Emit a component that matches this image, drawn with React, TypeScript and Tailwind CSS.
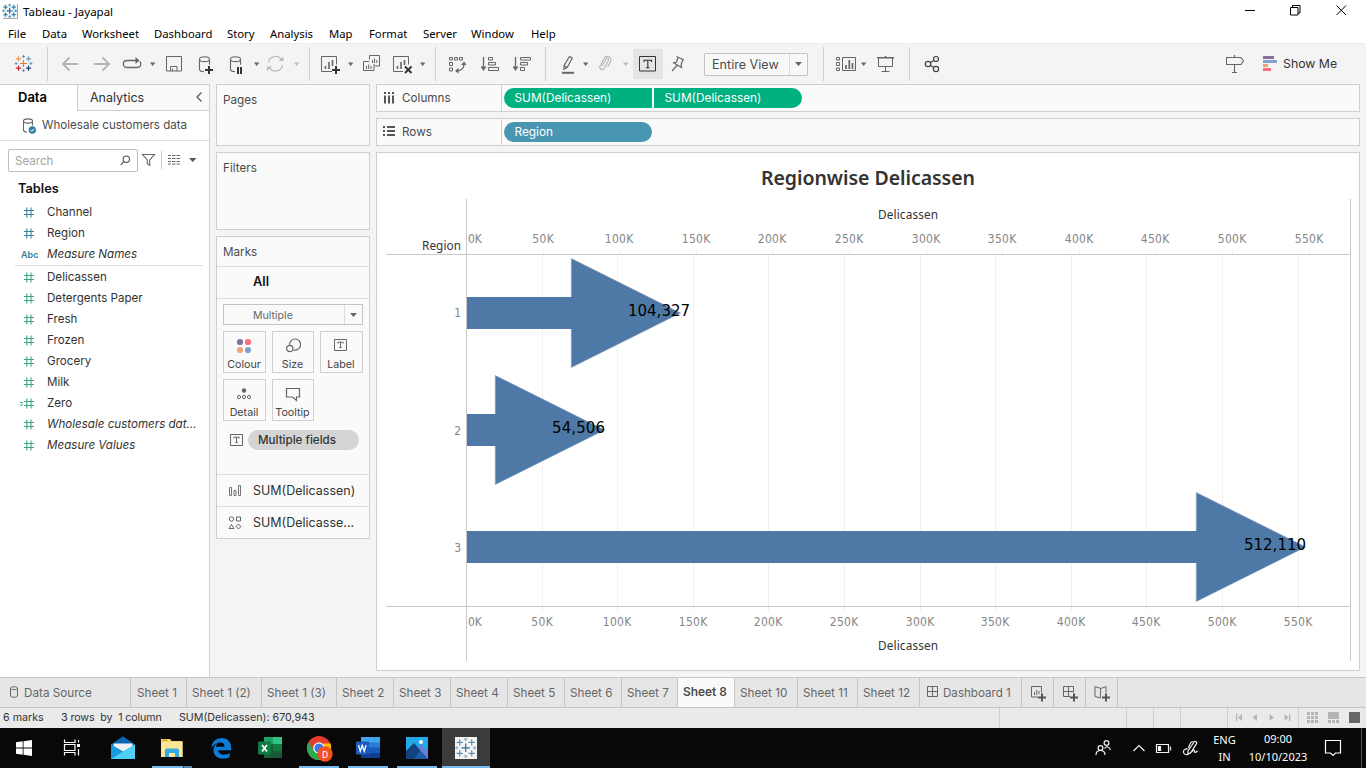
import React from "react";

type IcProps = {
  x: number;
  y: number;
  w: number;
  h: number;
  c?: string;
  children: React.ReactNode;
};

/* Icon slot whose drawing uses window coordinates. */
function Ic({ x, y, w, h, c = "#666", children }: IcProps) {
  return (
    <svg
      width={w}
      height={h}
      viewBox={`${x} ${y} ${w} ${h}`}
      fill="none"
      stroke={c}
      strokeWidth="1"
      className="block shrink-0"
    >
      {children}
    </svg>
  );
}

function Tb({ x, w, c, children }: { x: number; w: number; c?: string; children: React.ReactNode }) {
  return (
    <Ic x={x} y={44} w={w} h={40} c={c}>
      {children}
    </Ic>
  );
}

function Caret({ x, c = "#666" }: { x: number; c?: string }) {
  return <path d={`M${x} 62.5h5.4l-2.7 3.4z`} fill={c} stroke="none" />;
}

function Sep() {
  return <div className="h-[34px] w-px shrink-0 bg-[#cfcfcf]" />;
}

function Plus({ x, y, r, c }: { x: number; y: number; r: number; c: string }) {
  return <path d={`M${x - r} ${y}h${2 * r}M${x} ${y - r}v${2 * r}`} stroke={c} />;
}

function TableauMark({ x, y, k, colors }: { x: number; y: number; k: number; colors: string[] }) {
  return (
    <g strokeWidth={1.2}>
      <Plus x={x} y={y} r={3.6 * k} c={colors[0]} />
      <Plus x={x - 5 * k} y={y - 4.6 * k} r={2.6 * k} c={colors[1]} />
      <Plus x={x + 5 * k} y={y - 4.6 * k} r={2.6 * k} c={colors[2]} />
      <Plus x={x - 5 * k} y={y + 4.6 * k} r={2.6 * k} c={colors[3]} />
      <Plus x={x + 5 * k} y={y + 4.6 * k} r={2.6 * k} c={colors[4]} />
      <Plus x={x} y={y - 7 * k} r={1.5 * k} c={colors[5]} />
      <Plus x={x} y={y + 7 * k} r={1.5 * k} c={colors[5]} />
      <Plus x={x - 7.4 * k} y={y} r={1.5 * k} c={colors[6]} />
      <Plus x={x + 7.4 * k} y={y} r={1.5 * k} c={colors[6]} />
    </g>
  );
}

const BLUES = ["#1f6ea8", "#2f86b8", "#2f86b8", "#2f86b8", "#2f86b8", "#4aa0c8", "#4aa0c8"];

function TitleBar() {
  return (
    <div className="flex h-[23px] items-center bg-white">
      <Ic x={0} y={0} w={23} h={23}>
        <path d="M3 18.5H17.5V4" stroke="#a8a8a8" />
        <rect x="3" y="4" width="14" height="14" fill="#f3f8fb" stroke="none" />
        <TableauMark x={9.6} y={10.8} k={0.82} colors={BLUES} />
      </Ic>
      <span className="font-['Noto_Sans'] text-[11.5px] text-black">Tableau - Jayapal</span>
      <div className="ml-auto">
        <Ic x={1226} y={0} w={140} h={23} c="#000">
          <path d="M1245 10.5h10" />
          <path d="M1290.500 7.500h7.500v7.500h-7.500zM1292.500 7.500v-2h7.500v7.500h-2" />
          <path d="M1336.500 5.500l9.500 9.500M1346 5.500l-9.500 9.500" />
        </Ic>
      </div>
    </div>
  );
}

function MenuBar() {
  return (
    <div className="flex h-5 items-center bg-white pl-2 pt-[2px] font-['Noto_Sans'] text-[11.3px] text-black">
      <span className="w-[34px] shrink-0">File</span>
      <span className="w-[40px] shrink-0">Data</span>
      <span className="w-[72px] shrink-0">Worksheet</span>
      <span className="w-[73px] shrink-0">Dashboard</span>
      <span className="w-[43px] shrink-0">Story</span>
      <span className="w-[59px] shrink-0">Analysis</span>
      <span className="w-[40px] shrink-0">Map</span>
      <span className="w-[54px] shrink-0">Format</span>
      <span className="w-[48px] shrink-0">Server</span>
      <span className="w-[60px] shrink-0">Window</span>
      <span>Help</span>
    </div>
  );
}

function Cyl({ x }: { x: number }) {
  return (
    <path
      d={`M${x} 59.200c0-3.200 10-3.200 10 0s-10 3.200-10 0v10c0 1.400 1.500 2.300 4.500 2.400M${x + 10} 59.200v5.500`}
      strokeWidth="1.1"
    />
  );
}

function Toolbar() {
  return (
    <div className="flex h-[41px] items-center border-t border-[#ececec] bg-[#f4f4f4]">
      <Tb x={0} w={47}>
        <TableauMark
          x={23.5}
          y={63.5}
          k={1}
          colors={["#e8762c", "#e39a55", "#7a9bb8", "#c72037", "#1f3f7a", "#7a8fb8", "#6aa0b8"]}
        />
      </Tb>
      <Sep />
      <Tb x={48} w={38} c="#b2b2b2">
        <path d="M78 64H63M69.500 57.500L63 64l6.500 6.500" strokeWidth="1.8" />
      </Tb>
      <Tb x={86} w={32} c="#b2b2b2">
        <path d="M94 64h15M102.500 57.500L109 64l-6.500 6.500" strokeWidth="1.8" />
      </Tb>
      <Tb x={118} w={42}>
        <path d="M137 60.500h-9.500c-5.500 0-5.500 7 0 7h9c4.500 0 5.500-4 3.200-6" strokeWidth="1.3" />
        <path d="M135.500 57l4 3.500-4 3.500z" fill="#666" stroke="none" />
        <Caret x={150} />
      </Tb>
      <Tb x={160} w={30}>
        <path d="M166.500 56.500h15v14.500h-15z" />
        <path d="M170.500 71v-4.500h6.500v4.500M172.500 68.500v2.500" />
      </Tb>
      <Tb x={190} w={32}>
        <Cyl x={199.500} />
        <path d="M205 70h8M209 66v8" stroke="#333" strokeWidth="2" />
      </Tb>
      <Tb x={222} w={40}>
        <Cyl x={230.500} />
        <path d="M238 67v7M241 67v7" stroke="#333" strokeWidth="2" />
        <Caret x={254} />
      </Tb>
      <Tb x={262} w={47} c="#bbb">
        <path d="M268.500 62.500a7 7 0 0 1 13-2.500M282.500 65a7 7 0 0 1-13 2.500" strokeWidth="1.3" />
        <path d="M278.500 61h5v-4.500zM272 66.500h-5v4.500z" fill="#bbb" stroke="none" />
        <Caret x={294} c="#bbb" />
      </Tb>
      <Sep />
      <Tb x={310} w={47}>
        <path d="M332 71.500h-10.500v-15h15v8" />
        <path d="M325.500 66v3M329 62v7M332.500 60v6" strokeWidth="1.6" />
        <path d="M332 70h8M336 66v8" stroke="#333" strokeWidth="2" />
        <Caret x={348} />
      </Tb>
      <Tb x={357} w={30}>
        <path d="M369.500 59.500v-4h10v10.500h-4.500" />
        <path d="M372.500 60v3M374.500 58.500v4.500M376.800 60v3" />
        <path d="M369 61.500h-5.500v9h10.500v-6.500" />
        <path d="M366.500 66v3M368.700 64.500v4.500M371 66v3" />
      </Tb>
      <Tb x={387} w={48}>
        <path d="M403 71.500h-9.500v-15h15v8" />
        <path d="M397.500 66v3M401 62v7M404.500 60v5" strokeWidth="1.6" />
        <path d="M405 66.500l6.500 6.500M411.500 66.500l-6.500 6.500" stroke="#333" strokeWidth="1.9" />
        <Caret x={420} />
      </Tb>
      <Sep />
      <Tb x={436} w={37}>
        <path d="M449.500 57.500h3v2.500h-3zM454.500 57.500h3v2.500h-3zM459.500 57.500h3v2.500h-3zM449.500 62.500h3v3h-3zM449.500 68h3v3h-3z" />
        <path d="M464 64c0 4-2.500 6.500-7 7" strokeWidth="1.3" />
        <path d="M461 65l3.200-3.500 2.300 3.500zM458.500 68l-3.500 2.700 3.500 3z" fill="#666" stroke="none" />
      </Tb>
      <Tb x={473} w={33}>
        <path d="M483.500 57v11" strokeWidth="1.3" />
        <path d="M480.500 66.500h6l-3 4.500z" fill="#666" stroke="none" />
        <path d="M488.500 57.500h4v2.500h-4zM488.500 62.500h7v2.500h-7zM488.500 67.500h10v3h-10z" />
      </Tb>
      <Tb x={506} w={39}>
        <path d="M515.500 57v11" strokeWidth="1.300" />
        <path d="M512.500 66.500h6l-3 4.500z" fill="#666" stroke="none" />
        <path d="M520.500 57.500h10v2.500h-10zM520.500 62.500h7v2.500h-7zM520.500 67.500h4v3h-4z" />
      </Tb>
      <Sep />
      <Tb x={546} w={46}>
        <path d="M569.500 56.500l2.800 1.600-5 9.300-3.300 1.800v-3.500zM564.500 66l2.800 1.500" strokeWidth="1.200" />
        <path d="M562 72.800h12" strokeWidth="2" />
        <Caret x={583} />
      </Tb>
      <Tb x={592} w={41} c="#b2b2b2">
        <path
          d="M602 66l4-7c1-1.500 3.200-.4 2.500 1.300l-4.200 7.900c-1.600 2.600-5.600.8-4.300-2.300l4.300-7.600c1.700-3.200 6.400-2 6.700 1.200 0 .9-.3 1.600-.8 2.500l-2.600 4.800"
          strokeWidth="1.100"
        />
        <Caret x={623} c="#bbb" />
      </Tb>
      <div className="h-[30px] w-[30px] shrink-0 bg-[#e4e4e4]">
        <Ic x={633} y={49} w={30} h={30} c="#333">
          <path d="M639.500 56.500h16v14.500h-16z" />
          <path d="M644 62v-1.800h7.500v1.800M647.800 60.200v7.500M646 67.700h3.500" strokeWidth="1.100" />
        </Ic>
      </div>
      <Tb x={663} w={41}>
        <path
          d="M676.500 56.500l6.500 3M678 57.500l-1.500 4.500c-1 .6-2 .8-3.500.5l8.500 5c-.5-1.500-.6-2.500-.1-4l2-4.500M677 65.500l-5 5.500"
          strokeWidth="1.200"
        />
      </Tb>
      <div className="flex h-[23px] w-[104px] shrink-0 items-stretch rounded-[1px] border border-[#c4c4c4] bg-[#f8f8f8]">
        <span className="flex-1 pl-[7px] font-[Inter] text-[12.6px] leading-[21px] text-[#4c4c4c]">
          Entire View
        </span>
        <div className="flex w-[18px] items-center justify-center border-l border-[#dcdcdc]">
          <svg width="7" height="4" className="block">
            <path d="M0 0h7L3.500 4z" fill="#666" />
          </svg>
        </div>
      </div>
      <div className="w-[15px] shrink-0" />
      <Sep />
      <Tb x={824} w={46}>
        <path d="M836.500 57.500h3v2.500h-3zM836.500 62.500h3v3h-3zM836.500 68h3v2.500h-3zM842.500 57.500h13v13h-13z" />
        <path d="M846 65v4M849.300 60v9M852.500 63v6" strokeWidth="1.700" />
        <Caret x={861} />
      </Tb>
      <Tb x={870} w={39}>
        <path d="M877 57.800h17M885.500 56v2" strokeWidth="1.600" />
        <path d="M878.500 58v8.500h14v-8.500M885.500 66.500v5M881.500 71.500h8" />
      </Tb>
      <Sep />
      <Tb x={910} w={40} c="#444">
        <g strokeWidth="1.200">
          <circle cx="936" cy="59" r="2.500" />
          <circle cx="928" cy="64" r="2.700" />
          <circle cx="936" cy="69" r="2.600" />
          <path d="M930.400 62.700l3.400-2.300M930.400 65.300l3.400 2.300" />
        </g>
      </Tb>
      <div className="ml-auto flex w-[140px] items-center">
        <Tb x={1226} w={57}>
          <path d="M1226.500 57.500h14.500l2.500 3.500-2.500 3.500h-14.500zM1234.500 55v2.500M1234.500 64.500v8M1232 72.500h5" strokeWidth="1.100" />
          <g stroke="none">
            <path d="M1263 56h11v3h-11z" fill="#86709a" />
            <path d="M1263 60h14v3h-14z" fill="#7ea3cc" />
            <path d="M1263 64h5v3h-5z" fill="#f2a37a" />
            <path d="M1263 68h8v3h-8z" fill="#fb6d7a" />
          </g>
        </Tb>
        <span className="font-[Inter] text-[12.300px] text-[#333]">Show Me</span>
      </div>
    </div>
  );
}

type FieldKind = "num" | "abc" | "calc";

function Field({ name, kind = "num", dim, italic }: { name: string; kind?: FieldKind; dim?: boolean; italic?: boolean }) {
  const c = dim ? "#3b82a0" : "#3fa683";
  return (
    <div className="flex h-[21px] items-center">
      <div className="flex w-[47px] shrink-0 items-center">
        {kind === "abc" ? (
          <span className="pl-[21px] pt-[2px] font-[Inter] text-[9px] font-semibold text-[#3b82a0]">Abc</span>
        ) : (
          <svg width="47" height="21" fill="none" stroke={c} strokeWidth="1.100" className="block">
            <path d="M24 9.500h10M24 13.500h10M26.800 6.500v10M31 6.500v10" />
            {kind === "calc" && <path d="M20 10.500h3M20 13h3" />}
          </svg>
        )}
      </div>
      <span
        className={
          italic
            ? "whitespace-nowrap pt-[2px] font-[Inter] text-[11.600px] italic text-[#333]"
            : "whitespace-nowrap pt-[2px] font-[Inter] text-[11.600px] text-[#333]"
        }
      >
        {name}
      </span>
    </div>
  );
}

function DataPane() {
  return (
    <div className="flex w-[210px] shrink-0 flex-col border-r border-t border-[#cfcfcf] bg-white">
      <div className="flex h-[26px] shrink-0">
        <div className="w-[77px] shrink-0 pl-[18px] font-[Inter] text-[13px] font-semibold leading-[25px] text-black">Data</div>
        <div className="flex flex-1 items-center border-b border-l border-[#cfcfcf] bg-[#fafafa] pl-3">
          <span className="font-[Inter] text-[12.500px] leading-[24px] text-[#333]">Analytics</span>
          <svg width="7" height="10" fill="none" stroke="#555" strokeWidth="1.200" className="mb-[2px] ml-auto mr-[6px] block">
            <path d="M5.500 .5L1 5l4.500 4.500" />
          </svg>
        </div>
      </div>
      <div className="flex h-[30px] shrink-0 items-center border-b border-[#dedede]">
        <Ic x={0} y={111} w={42} h={28}>
          <path d="M23.500 120c0-2.800 9-2.800 9 0s-9 2.800-9 0v9c0 1.300 1.200 2 3.500 2.200M32.500 120v4.500" strokeWidth="1.100" />
          <circle cx="32.300" cy="129" r="3.700" fill="#2f7fa3" stroke="none" />
          <path d="M30.600 129l1.300 1.300 2.200-2.500" stroke="#fff" />
        </Ic>
        <span className="font-[Inter] text-[11.600px] text-[#4c4c4c]">Wholesale customers data</span>
      </div>
      <div className="flex h-[40px] shrink-0 items-center pl-2">
        <div className="mb-[1px] flex h-[23px] w-[130px] shrink-0 items-center rounded-[2px] border border-[#bdbdbd] pl-[6px] pr-[6px]">
          <span className="pt-[2px] font-[Inter] text-[11.600px] text-[#a5a5a5]">Search</span>
          <svg width="11" height="11" fill="none" stroke="#555" strokeWidth="1.100" className="ml-auto block">
            <circle cx="6.300" cy="4.200" r="3.200" />
            <path d="M4 6.500L.8 9.800" />
          </svg>
        </div>
        <Ic x={138} y={150} w={71} h={22}>
          <path d="M142.500 154.500h12l-4.800 5.500v5.500l-2.400-1.800v-3.700z" strokeWidth="1.100" />
          <path d="M161.500 151v18" stroke="#cfcfcf" />
          <path d="M168 155.500h3M172 155.500h3.500M176.500 155.500h3.500M168 158.500h3M172 158.500h3.500M176.500 158.500h3.500M168 161.500h3M172 161.500h3.500M176.500 161.500h3.500M168 164h3M172 164h3.500M176.500 164h3.500" />
          <path d="M189 158h7.400l-3.700 4z" fill="#555" stroke="none" />
        </Ic>
      </div>
      <div className="h-[20px] shrink-0 pl-[18px] font-[Inter] text-[12.800px] font-semibold leading-[16px] text-[#111]">Tables</div>
      <Field name="Channel" dim />
      <Field name="Region" dim />
      <Field name="Measure Names" kind="abc" dim italic />
      <div className="ml-[15px] mr-[6px] mt-[1px] h-px shrink-0 bg-[#dcdcdc]" />
      <Field name="Delicassen" />
      <Field name="Detergents Paper" />
      <Field name="Fresh" />
      <Field name="Frozen" />
      <Field name="Grocery" />
      <Field name="Milk" />
      <Field name="Zero" kind="calc" />
      <Field name="Wholesale customers dat..." italic />
      <Field name="Measure Values" italic />
    </div>
  );
}

function TBox() {
  return (
    <>
      <path d="M.5 .5h12v11h-12z" />
      <path d="M3.800 4.500v-1.300h5.400v1.300M6.500 3.200v5.300M5.300 8.500h2.400" />
    </>
  );
}

function MarkButton({ label, children }: { label: string; children: React.ReactNode }) {
  return (
    <div className="flex h-[42px] flex-col items-center border border-[#cfcfcf] bg-[#fafafa] pr-px pt-[6px]">
      <svg width="16" height="16" fill="none" stroke="#666" strokeWidth="1" className="block shrink-0">
        {children}
      </svg>
      <span className="mt-[4px] font-[Inter] text-[10.700px] leading-[14px] text-[#444]">{label}</span>
    </div>
  );
}

function Cards() {
  return (
    <div className="flex w-[154px] shrink-0 flex-col gap-[6px] font-[Inter] text-[11.700px] text-[#4c4c4c]">
      <div className="h-[62px] shrink-0 border border-[#cfcfcf] bg-[#fafafa] pl-[6px] leading-[30px]">Pages</div>
      <div className="h-[78px] shrink-0 border border-[#cfcfcf] bg-[#fafafa] pl-[6px] leading-[30px]">Filters</div>
      <div className="flex h-[303px] shrink-0 flex-col border border-[#cfcfcf] bg-[#fafafa]">
        <div className="h-[30px] shrink-0 border-b border-[#dcdcdc] pl-[6px] leading-[30px]">Marks</div>
        <div className="h-[32px] shrink-0 border-b border-[#dcdcdc] pl-[36px] text-[12.800px] font-semibold leading-[29px] text-[#111]">
          All
        </div>
        <div className="flex h-[176px] shrink-0 flex-col border-b border-[#dcdcdc] px-[6px] pt-[5px]">
          <div className="flex h-[21px] shrink-0 border border-[#c4c4c4]">
            <span className="flex-1 pl-[29px] text-[10.600px] leading-[21px] text-[#666]">Multiple</span>
            <div className="flex w-[18px] items-center justify-center border-l border-[#dcdcdc]">
              <svg width="7" height="4" className="block">
                <path d="M0 0h7L3.500 4z" fill="#666" />
              </svg>
            </div>
          </div>
          <div className="mt-[6px] grid grid-cols-[43px_42px_43px] gap-[6px]">
            <MarkButton label="Colour">
              <g stroke="none">
                <circle cx="4" cy="4" r="3.100" fill="#86709a" />
                <circle cx="12" cy="4" r="3.100" fill="#fb6d7a" />
                <circle cx="4" cy="12" r="3.100" fill="#f2a37a" />
                <circle cx="12" cy="12" r="3.100" fill="#7ea3cc" />
              </g>
            </MarkButton>
            <MarkButton label="Size">
              <g strokeWidth="1.200">
                <path d="M4.600 6.800a5.500 5.500 0 1 1 4 5" />
                <circle cx="4.800" cy="10.500" r="3.200" />
              </g>
            </MarkButton>
            <MarkButton label="Label">
              <g transform="translate(1 1)">
                <TBox />
              </g>
            </MarkButton>
            <MarkButton label="Detail">
              <circle cx="8" cy="4.500" r="2.200" fill="#666" stroke="none" />
              <circle cx="3" cy="11" r="1.600" />
              <circle cx="8" cy="11" r="1.600" />
              <circle cx="13" cy="11" r="1.600" />
            </MarkButton>
            <MarkButton label="Tooltip">
              <path d="M1.500 2.500h13v8.500h-3v3.500l-4-3.500h-6z" strokeWidth="1.200" />
            </MarkButton>
          </div>
          <div className="mt-[9px] flex h-5 shrink-0 items-center pl-[7px]">
            <svg width="13" height="12" fill="none" stroke="#666" className="block shrink-0">
              <TBox />
            </svg>
            <div className="ml-[5px] h-5 w-[111px] rounded-full bg-[#d4d4d4] pl-[10px] text-[11.600px] font-medium leading-[20px] text-[#333]">
              Multiple fields
            </div>
          </div>
        </div>
        <div className="flex h-8 shrink-0 items-center border-b border-[#dcdcdc] text-[12.500px] text-[#333]">
          <svg width="36" height="20" fill="none" stroke="#777" className="block shrink-0">
            <path d="M12.500 6.500h2v8h-2zM17 9.500h2v5h-2zM21.500 4.500h2v10h-2z" />
          </svg>
          <span className="pt-px">SUM(Delicassen)</span>
        </div>
        <div className="flex h-8 shrink-0 items-center text-[12.500px] text-[#333]">
          <svg width="36" height="20" fill="none" stroke="#666" className="block shrink-0">
            <circle cx="14.500" cy="6" r="2.200" />
            <path d="M19.500 4h4v4h-4zM14.500 11.500l2.500 4h-5zM21.500 11l2.500 2.500-2.500 2.500-2.500-2.500z" />
          </svg>
          SUM(Delicasse...
        </div>
      </div>
    </div>
  );
}

const TICKS: [string, number, number][] = [
  ["50K", 543.5, 542.5],
  ["100K", 619.5, 617.5],
  ["150K", 696.5, 693.5],
  ["200K", 772.5, 768.5],
  ["250K", 849.5, 844.5],
  ["300K", 926.5, 920.5],
  ["350K", 1002.500, 995.500],
  ["400K", 1079.500, 1071.500],
  ["450K", 1155.500, 1146.500],
  ["500K", 1232.500, 1222.500],
  ["550K", 1309.500, 1298.500],
];

const BARS = [
  { region: "1", y: 313, base: 317, head: 571, label: "104,327", lx: 628, lw: 62 },
  { region: "2", y: 430, base: 435, head: 495, label: "54,506", lx: 552, lw: 53 },
  { region: "3", y: 547, base: 552, head: 1196, label: "512,110", lx: 1244, lw: 62 },
];

function Chart() {
  const axis = { fontSize: 12, fill: "#868686", stroke: "none", fontFamily: "'DejaVu Sans Condensed','Noto Sans',sans-serif" };
  const head = { fontSize: 11.8, fill: "#333", stroke: "none", fontFamily: "'Noto Sans',sans-serif" };
  return (
    <svg width="982" height="517" viewBox="377 153 982 517" fill="none" className="block">
      <text x="761" y="185" fontSize="19.500" fontWeight="600" fill="#333" textLength="214" fontFamily="'Noto Sans',sans-serif">
        Regionwise Delicassen
      </text>
      {TICKS.map(([t, a, b]) => (
        <g key={t}>
          <path d={`M${a} 249v5M${b} 255v356`} stroke="#f0f0f0" />
          <text x={a - 0.5} y="243" textAnchor="middle" textLength={t.length === 3 ? 21.500 : 28.500} {...axis}>{t}</text>
          <text x={b - 0.5} y="626" textAnchor="middle" textLength={t.length === 3 ? 21.500 : 28.500} {...axis}>{t}</text>
        </g>
      ))}
      <text x="468" y="243" {...axis}>0K</text>
      <text x="468" y="626" {...axis}>0K</text>
      <text x="878" y="219" textLength="60" {...head}>Delicassen</text>
      <text x="878" y="650" textLength="60" {...head}>Delicassen</text>
      <text x="422" y="250" textLength="39" {...head}>Region</text>
      {BARS.map((b) => (
        <g key={b.region}>
          <text x="461" y={b.base} textAnchor="end" {...axis}>{b.region}</text>
          <path d={`M${b.head + 0.3} ${b.y - 54.500}v109L${b.head + 109.500} ${b.y}z`} fill="#4e79a7" stroke="#7f9fc0" strokeWidth="0.600" />
          <path d={`M467 ${b.y - 16}h${b.head - 464}v32H467z`} fill="#4e79a7" />
        </g>
      ))}
      <path d="M386 254.500h965M386 606.500h965M466.500 199v462M1350.500 199v462" stroke="#c8c8c8" />
      {BARS.map((b) => (
        <text
          key={b.label}
          x={b.lx}
          y={b.y + 3}
          fontSize="15"
          fill="#000"
          textLength={b.lw}
          fontFamily="'DejaVu Sans',sans-serif"
        >
          {b.label}
        </text>
      ))}
    </svg>
  );
}

function Shelves() {
  return (
    <div className="flex w-[984px] shrink-0 flex-col gap-[6px]">
      <div className="flex h-7 shrink-0 border border-[#cfcfcf] bg-[#fafafa] font-[Inter] text-[11.700px] text-[#4c4c4c]">
        <div className="flex w-[125px] shrink-0 items-center border-r border-[#cfcfcf] pl-[7px]">
          <svg width="18" height="12" fill="none" stroke="#555" strokeWidth="2" className="block">
            <path d="M1 0v2M5 0v2M9 0v2M1 3.500v8M5 3.500v8M9 3.500v8" />
          </svg>
          <span className="pt-[2px]">Columns</span>
        </div>
        <div className="flex items-center gap-[2px] pl-[2px] text-[11.850px] text-white">
          <div className="h-5 w-[148px] rounded-l-full bg-[#00b180] pl-[10.500px] leading-[20px]">SUM(Delicassen)</div>
          <div className="h-5 w-[148px] rounded-r-full bg-[#00b180] pl-[10.500px] leading-[20px]">SUM(Delicassen)</div>
        </div>
      </div>
      <div className="flex h-7 shrink-0 border border-[#cfcfcf] bg-[#fafafa] font-[Inter] text-[11.700px] text-[#4c4c4c]">
        <div className="flex w-[125px] shrink-0 items-center border-r border-[#cfcfcf] pl-[6px]">
          <svg width="19" height="12" fill="none" stroke="#555" strokeWidth="2" className="mb-[2px] block">
            <path d="M0 2h2M4 2h8M0 6h2M4 6h8M0 10h2M4 10h8" />
          </svg>
          <span className="pt-[2px]">Rows</span>
        </div>
        <div className="flex items-center pl-[2px] text-[11.850px] text-white">
          <div className="h-5 w-[148px] rounded-full bg-[#4996b2] pl-[10.500px] leading-[20px]">Region</div>
        </div>
      </div>
      <div className="h-[519px] shrink-0 border border-[#cfcfcf] bg-white">
        <Chart />
      </div>
    </div>
  );
}

function Tab({ w, label, active }: { w: string; label: string; active?: boolean }) {
  return (
    <div
      className={
        (active
          ? "bg-[#fafafa] pl-[5px] text-[11.900px] font-semibold leading-[28px] text-[#4c4c4c] "
          : "pl-[5px] text-[11.700px] leading-[30px] text-[#666] ") +
        "shrink-0 whitespace-nowrap border-r border-[#c6c6c6] " +
        w
      }
    >
      {label}
    </div>
  );
}

function SheetTabs() {
  return (
    <div className="flex h-[31px] shrink-0 border-y border-[#c6c6c6] bg-[#e6e6e6] font-[Inter]">
      <div className="flex w-[131px] shrink-0 items-center border-r border-[#c6c6c6] text-[11.700px] text-[#666]">
        <svg width="24" height="29" fill="none" stroke="#666" className="block">
          <path d="M10.500 10c0-1.600 7-1.600 7 0v8c0 1.600-7 1.600-7 0zM10.500 10.500c0 1.500 7 1.500 7 0" />
        </svg>
        <span className="leading-[30px]">Data Source</span>
      </div>
      <Tab w="w-[56px] indent-px" label="Sheet 1" />
      <Tab w="w-[75px]" label="Sheet 1 (2)" />
      <Tab w="w-[75px]" label="Sheet 1 (3)" />
      <Tab w="w-[57px]" label="Sheet 2" />
      <Tab w="w-[57px]" label="Sheet 3" />
      <Tab w="w-[57px]" label="Sheet 4" />
      <Tab w="w-[57px]" label="Sheet 5" />
      <Tab w="w-[57px]" label="Sheet 6" />
      <Tab w="w-[56px]" label="Sheet 7" />
      <Tab w="w-[57px]" label="Sheet 8" active />
      <Tab w="w-[63px]" label="Sheet 10" />
      <Tab w="w-[60px]" label="Sheet 11" />
      <Tab w="w-[62px]" label="Sheet 12" />
      <div className="flex w-[102px] shrink-0 items-center border-r border-[#c6c6c6] text-[11.600px] text-[#666]">
        <Ic x={920} y={678} w={23} h={29}>
          <path d="M927.500 686.500h10v10h-10zM932.500 686.500v10M927.500 691.500h10" />
        </Ic>
        <span className="leading-[30px]">Dashboard 1</span>
      </div>
      <div className="flex w-[32px] shrink-0 border-r border-[#c6c6c6]">
        <Ic x={1022} y={678} w={31} h={29}>
          <path d="M1038 697h-6.500v-10.500h10v6" />
          <path d="M1034.500 692v3M1036.700 690v5M1039 691v3" />
          <path d="M1038 697.500h8M1042 693.500v8" stroke="#555" strokeWidth="2" />
        </Ic>
      </div>
      <div className="flex w-[32px] shrink-0 border-r border-[#c6c6c6]">
        <Ic x={1054} y={678} w={31} h={29}>
          <path d="M1070 696.500h-6.500v-10h10v6M1068.500 686.500v10M1063.500 691.500h10" />
          <path d="M1070 697.500h8M1074 693.500v8" stroke="#555" strokeWidth="2" />
        </Ic>
      </div>
      <div className="flex w-[32px] shrink-0 border-r border-[#c6c6c6]">
        <Ic x={1086} y={678} w={31} h={29}>
          <path d="M1101 698l-6-1.500v-10l6 2 5-2v6M1100.500 688.500v9" />
          <path d="M1102 697.500h8M1106 693.500v8" stroke="#555" strokeWidth="2" />
        </Ic>
      </div>
    </div>
  );
}

function StatusBar() {
  return (
    <div className="flex h-5 shrink-0 items-center bg-[#eaeaea] font-[Inter] text-[10.700px] text-[#333]">
      <span className="w-[61px] shrink-0 pl-[3px] pt-px">6 marks</span>
      <span className="w-[118px] shrink-0 whitespace-pre pt-px tracking-[-0.010em]">3 rows  by  1 column</span>
      <span className="pt-px">SUM(Delicassen): 670,943</span>
      <div className="ml-auto">
        <Ic x={990} y={708} w={376} h={20}>
          <path d="M999.500 708v20M1126.500 708v20M1153.500 708v20M1180.500 708v20M1227.500 708v20M1298.500 708v20" stroke="#cfcfcf" />
          <g fill="#b5b5b5" stroke="none">
            <path d="M1236 714h1.300v7h-1.300zM1242 714v7l-4-3.500zM1257 714v7l-4.500-3.500zM1269.500 714v7l4.500-3.500zM1284.500 714v7l4-3.500zM1289 714h1.300v7h-1.300z" />
            <path d="M1307 712h3v3h-3zM1311 712h3v3h-3zM1315 712h3v3h-3zM1307 716h3v3h-3zM1311 716h3v3h-3zM1315 716h3v3h-3zM1307 720h3v3h-3zM1311 720h3v3h-3zM1315 720h3v3h-3z" />
            <path d="M1328 712h11v7h-11zM1328 720h3v3h-3zM1332 720h3v3h-3zM1336 720h3v3h-3z" />
            <path d="M1349 712h11v11h-11z" fill="#666" />
          </g>
        </Ic>
      </div>
    </div>
  );
}

function Tk({ x, w, children }: { x: number; w: number; children: React.ReactNode }) {
  return (
    <Ic x={x} y={728} w={w} h={40} c="none">
      {children}
    </Ic>
  );
}

function Taskbar() {
  return (
    <div className="flex h-10 shrink-0 items-center bg-[#080808] text-white">
      <Tk x={0} w={48}>
        <path d="M16 742.300l6.700-1v6.200H16zM23.500 741.200l8.500-1.200v7.500h-8.500zM16 748.400h6.700v6.300l-6.700-1zM23.500 748.400h8.500v7.600l-8.500-1.200z" fill="#fff" />
      </Tk>
      <Tk x={48} w={50}>
        <path d="M64.500 739.500v3h10.500v-3M64.500 755.500v-3h10.500v3M64.500 744.500h10.500v6h-10.500zM78.500 740v2.500M78.500 749v6.500" stroke="#fff" strokeWidth="1.200" />
        <path d="M77 744h3v3h-3z" fill="#fff" />
      </Tk>
      <Tk x={98} w={49}>
        <path d="M111 744.500l12-8.200 12 8.200v5h-24z" fill="#0d66b5" />
        <path d="M113.500 743.500h19v6l-9.500 5-9.500-5z" fill="#f2f2f2" />
        <path d="M111 744.500l12 7 12-7V759h-24z" fill="#35b5ea" />
        <path d="M135 744.500L111 759h24z" fill="#4fd0f5" />
        <path d="M111 744.500V759l12-7.500z" fill="#1b9ae0" />
      </Tk>
      <Tk x={147} w={49}>
        <path d="M161 739h9l1.500 2h11v16h-21.500z" fill="#f8d775" />
        <path d="M161 742h21.500v15H161z" fill="#fbe596" />
        <path d="M162.500 739.500h5v1.500h-5z" fill="#d9a520" />
        <path d="M165 757v-6.500c0-1.200.8-2 2-2h10c1.200 0 2 .8 2 2v6.500h-4v-4h-6v4z" fill="#35a8e0" />
        <path d="M152 766h31v2h-31z" fill="#76b9ed" />
        <path d="M183.500 766h8.500v2h-8.500z" fill="#5688ae" />
      </Tk>
      <Tk x={196} w={49}>
        <path
          d="M211.500 747.500c.6-6 4.800-9.500 10-9.500 6 0 9.700 4 9.700 10v2.300h-13.200c.3 3 2.700 4.400 5.700 4.400 2.400 0 4.400-.6 6-1.600v3.800c-1.900 1.100-4.400 1.700-7 1.700-5.600 0-9.200-3.500-9.200-8.600 0-3.200 1.600-5.800 4.300-7.200-1 1-1.700 2.300-1.800 4h8.600c0-2.700-1.300-4.400-4-4.400-3.500 0-6.800 1.900-9.100 5.100z"
          fill="#0a7ddb"
        />
      </Tk>
      <Tk x={245} w={49}>
        <path d="M264 737h18v21h-18z" fill="#21a366" />
        <path d="M273 737h9v7h-9z" fill="#33c481" />
        <path d="M264 744h9v7h-9zM264 751h18v7h-18z" fill="#185c37" />
        <path d="M273 744h9v7h-9z" fill="#107c41" />
        <path d="M258 741.500h13v13h-13z" fill="#107c41" />
        <path d="M262 745l5 6.500M267 745l-5 6.500" stroke="#fff" strokeWidth="1.800" />
      </Tk>
      <Tk x={294} w={49}>
        <circle cx="319" cy="748" r="12" fill="#e33b2e" />
        <path d="M308.600 742A12 12 0 0 0 319 760l5-9-5-3-5 3z" fill="#2da94f" />
        <path d="M331 746a12 12 0 0 1-12 14l5.500-9-1-7.500h7.200z" fill="#fdbd00" />
        <circle cx="319" cy="748" r="5.800" fill="#fff" />
        <circle cx="319" cy="748" r="4.600" fill="#3b78e7" />
        <circle cx="325" cy="754" r="7.700" fill="#f4511e" />
        <text x="325" y="757.500" textAnchor="middle" fontSize="9.500" fill="#fff" fontFamily="Roboto">D</text>
        <path d="M299 766h40v2h-40z" fill="#76b9ed" />
      </Tk>
      <Tk x={343} w={49}>
        <path d="M361 737h19v21h-19z" fill="#2b7cd3" />
        <path d="M361 737h19v5.500h-19z" fill="#41a5ee" />
        <path d="M361 747.500h19v5.500h-19z" fill="#185abd" />
        <path d="M361 753h19v5h-19z" fill="#103f91" />
        <path d="M356 741.500h13v13h-13z" fill="#185abd" />
        <path d="M358.500 745l1.700 6.300 2-6 2 6 1.900-6.300" stroke="#fff" strokeWidth="1.300" />
        <path d="M348 766h40v2h-40z" fill="#76b9ed" />
      </Tk>
      <Tk x={392} w={50}>
        <path d="M406 737h22v22h-22z" fill="#22a7e8" />
        <path d="M406 751l8-8 14 16h-22z" fill="#12427c" />
        <path d="M418 747.500l3-3 7 7V759z" fill="#6a7ed8" />
        <path d="M428 759h-14l6-8.500z" fill="#1e5ba8" />
        <circle cx="421" cy="742" r="2" fill="#fff" />
        <path d="M397 766h40v2h-40z" fill="#76b9ed" />
      </Tk>
      <div className="h-10 w-12 shrink-0 bg-[#3b3b3b]">
        <Tk x={442} w={48}>
          <path d="M455 737h22v22h-22z" fill="#f4f4f4" />
          <TableauMark x={465.700} y={747.800} k={1.200} colors={["#2a6f9e", "#5c8fb5", "#5c8fb5", "#5c8fb5", "#5c8fb5", "#8fb4d0", "#8fb4d0"]} />
          <path d="M442 766h48v2h-48z" fill="#76b9ed" />
        </Tk>
      </div>
      <div className="ml-auto flex h-10 items-center font-['Noto_Sans'] text-[11px] leading-[17px]">
        <Ic x={1086} y={728} w={120} h={40} c="#f2f2f2">
          <g strokeWidth="1.200">
            <circle cx="1106.500" cy="743" r="2.400" />
            <circle cx="1100.500" cy="748" r="2.400" />
            <path d="M1096 755c0-6 9-6 9 0M1104.500 748.500c2-2.500 5.500-2 5.800 1.500" />
            <path d="M1133.500 751l5.500-5.500 5.500 5.500" />
            <path d="M1156.500 744.500h12v8h-12zM1170.500 746.500v4" />
            <path d="M1158.500 746.500h2v4h-2z" fill="#fff" />
            <path d="M1188 751l6-9c1-1.500 3.500 0 2.500 1.600l-5.600 9-3 1.700zM1188 749c-3-.5-5 1-4.500 3.500s4 2.500 6 1l3-2.500c1-1.500 2-1 2 .5s1.500 1 3-.5M1193 742c-2-1.500-4 4-4.500 6" />
          </g>
        </Ic>
        <div className="w-[37px] text-center">
          <div>ENG</div>
          <div>IN</div>
        </div>
        <div className="w-[70px] pb-px text-center">
          <div>09:00</div>
          <div className="pt-px">10/10/2023</div>
        </div>
        <Ic x={1313} y={728} w={53} h={40} c="#fff">
          <path d="M1325.500 740.500h15v12.500h-5l-2.500 2.500-2.500-2.500h-5z" strokeWidth="1.200" />
          <path d="M1361.500 728v40" stroke="#555" />
        </Ic>
      </div>
    </div>
  );
}

export default function App() {
  return (
    <div className="flex h-[768px] w-[1366px] flex-col overflow-hidden bg-[#f4f4f4]">
      <TitleBar />
      <MenuBar />
      <Toolbar />
      <div className="flex h-[593px] shrink-0 gap-[6px] bg-[#f4f4f4]">
        <DataPane />
        <Cards />
        <Shelves />
      </div>
      <SheetTabs />
      <StatusBar />
      <Taskbar />
    </div>
  );
}
